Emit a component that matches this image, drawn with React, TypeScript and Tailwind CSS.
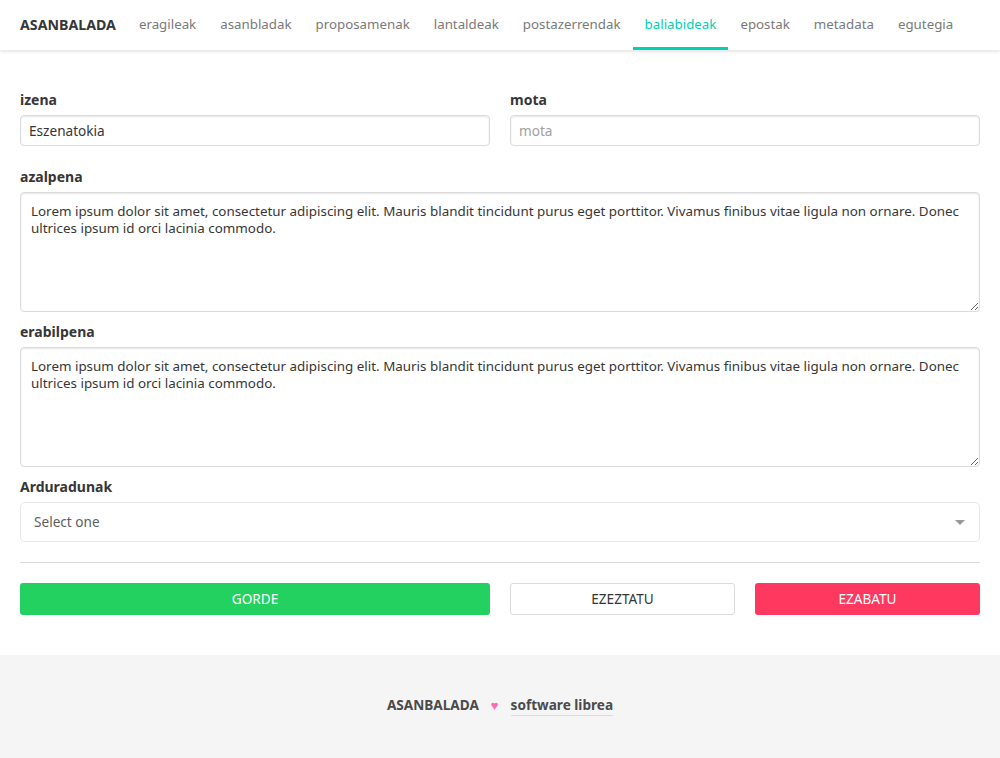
const LOREM =
  "Lorem ipsum dolor sit amet, consectetur adipiscing elit. Mauris blandit tincidunt purus eget porttitor. Vivamus finibus vitae ligula non ornare. Donec ultrices ipsum id orci lacinia commodo.";

const navItems = [
  "eragileak",
  "asanbladak",
  "proposamenak",
  "lantaldeak",
  "postazerrendak",
  "baliabideak",
  "epostak",
  "metadata",
  "egutegia",
];

function Label({ children }: { children: React.ReactNode }) {
  return <label className="block text-[14px] font-bold text-[#363636] leading-[20px] mb-[5px]">{children}</label>;
}

function TextArea() {
  return (
    <textarea
      defaultValue={LOREM}
      className="block w-full h-[120px] resize-y rounded-[4px] border border-[#dbdbdb] bg-white px-[10px] pt-[10px] pb-[9px] text-[13.4px] leading-[17px] text-[#363636] shadow-[inset_0_1px_2px_rgba(10,10,10,0.1)] outline-none"
    />
  );
}

export default function App() {
  return (
    <div className="min-h-[758px] flex flex-col bg-white font-['Noto_Sans',sans-serif] text-[#4a4a4a]">
      <header className="h-[50px] flex items-stretch px-[8px] bg-white shadow-[0_2px_3px_rgba(10,10,10,0.1)] relative z-10">
        <a href="#" className="flex items-center pl-[12px] pr-[11px] pt-[3px] text-[14.2px] font-bold text-[#363636] border-b-[3px] border-transparent">
          ASANBALADA
        </a>
        {navItems.map((item) => (
          <a
            key={item}
            href="#"
            className={
              item === "baliabideak"
                ? "flex items-center px-[12px] text-[13.3px] text-[#00d1b2] border-b-[3px] border-[#00d1b2] pt-[3px]"
                : "flex items-center px-[12px] text-[13.3px] text-[#7a7a7a] border-b-[3px] border-transparent pt-[3px]"
            }
          >
            {item}
          </a>
        ))}
      </header>

      <main className="flex-1 px-[20px] pt-[40px] pb-[40px]">
        <div className="grid grid-cols-2 gap-x-[20px]">
          <div>
            <Label>izena</Label>
            <input
              defaultValue="Eszenatokia"
              className="block w-full h-[31px] rounded-[4px] border border-[#dbdbdb] bg-white px-[8px] text-[13.6px] text-[#363636] shadow-[inset_0_1px_2px_rgba(10,10,10,0.1)] outline-none"
            />
          </div>
          <div>
            <Label>mota</Label>
            <input
              placeholder="mota"
              className="block w-full h-[31px] rounded-[4px] border border-[#dbdbdb] bg-white px-[8px] text-[13.6px] text-[#363636] placeholder:text-[#a0a0a0] shadow-[inset_0_1px_2px_rgba(10,10,10,0.1)] outline-none"
            />
          </div>
        </div>

        <div className="mt-[21px]">
          <Label>azalpena</Label>
          <TextArea />
        </div>

        <div className="mt-[10px]">
          <Label>erabilpena</Label>
          <TextArea />
        </div>

        <div className="mt-[10px]">
          <Label>Arduradunak</Label>
          <div className="flex items-center justify-between h-[40px] rounded-[5px] border border-[#e8e8e8] bg-white pl-[13px] pr-[14px] text-[13.6px] text-[#5e5e5e]">
            <span>Select one</span>
            <span className="w-0 h-0 border-l-[5px] border-r-[5px] border-t-[5px] border-l-transparent border-r-transparent border-t-[#999]" />
          </div>
        </div>

        <hr className="mt-[20px] border-t border-[#d9d9d9]" />

        <div className="mt-[20px] grid grid-cols-[470px_1fr_1fr] gap-x-[20px]">
          <button className="h-[32px] rounded-[3px] bg-[#23d160] text-white text-[13.6px]">GORDE</button>
          <button className="h-[32px] rounded-[3px] border border-[#dbdbdb] bg-white text-[#363636] text-[13.6px]">
            EZEZTATU
          </button>
          <button className="h-[32px] rounded-[3px] bg-[#ff3860] text-white text-[13.6px]">EZABATU</button>
        </div>
      </main>

      <footer className="h-[103px] bg-[#f5f5f5] flex items-center justify-center gap-[12px] pb-[2px] text-[13.6px] font-bold text-[#4a4a4a]">
        <span>ASANBALADA</span>
        <span className="text-[#ff69b4] text-[13px]">♥</span>
        <a href="#" className="border-b border-[#dbdbdb]">
          software librea
        </a>
      </footer>
    </div>
  );
}
